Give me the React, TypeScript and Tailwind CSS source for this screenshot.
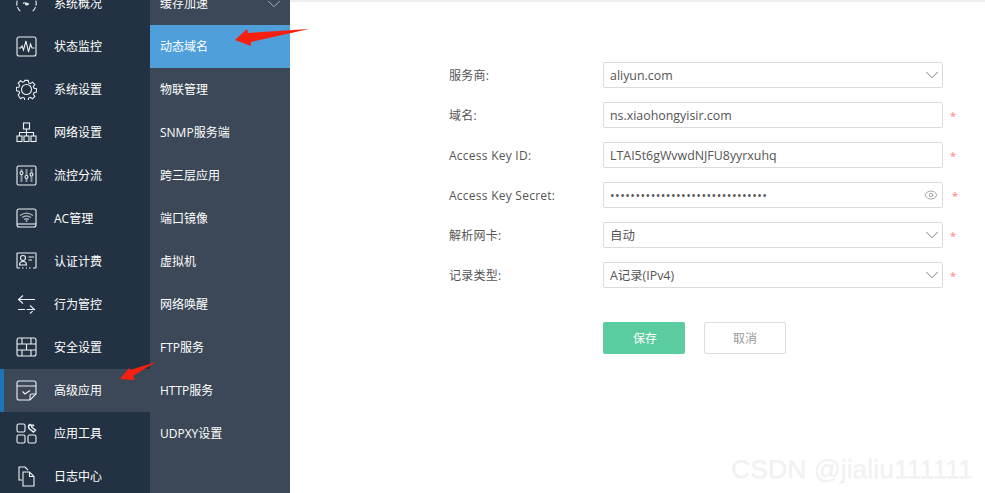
import React from 'react';
import { ChevronDown, Eye } from 'lucide-react';

const fontStack = "font-['Open_Sans','Noto_Sans_CJK_SC',sans-serif]";

const iconStroke = {
    fill: 'none',
    stroke: 'currentColor',
    strokeWidth: 1.1,
};

const Svg = ({ children }: { children: React.ReactNode }) => (
    <svg width="21" height="21" viewBox="0 0 21 21" className="shrink-0 text-[#eef1f4]" {...iconStroke}>
        {children}
    </svg>
);

const icons: Record<string, React.ReactNode> = {
    overview: (
        <Svg>
            <path d="M5 2.5C2.5 4 .8 7 .8 10.5c0 3.3 1.4 6 3.7 7.8M16 2.5c2.5 1.5 4.2 4.5 4.2 8 0 3.3-1.4 6-3.7 7.8" strokeDasharray="5 1.5" />
            <path d="M7 10.5c1-1 2-1 3 0s2 1 3 0" />
            <circle cx="10.5" cy="11" r="1" />
        </Svg>
    ),
    monitor: (
        <Svg>
            <rect x="1" y="1" width="19" height="19" rx="2" />
            <path d="M2.500 12h2l1.500-2 1.500 4 2.500-9 2.500 11 2-8 1.500 4h2.500" />
        </Svg>
    ),
    settings: (
        <Svg>
            <path d="M8.8 1h3.4l.5 2.6 1.7.7 2.2-1.5 2.4 2.4-1.5 2.2.7 1.7 2.6.5v3.4l-2.6.5-.7 1.7 1.5 2.2-2.4 2.4-2.2-1.5-1.7.7-.5 2.6H8.8l-.5-2.6-1.7-.7-2.2 1.5L2 16l1.5-2.2-.7-1.7L.2 11.6V8.2l2.6-.5.7-1.7L2 3.8 4.4 1.4l2.2 1.5 1.7-.7z" transform="translate(.2 .4) scale(.98)" />
            <circle cx="10.5" cy="10.5" r="5" />
        </Svg>
    ),
    network: (
        <Svg>
            <rect x="7.5" y="1" width="6" height="6" />
            <rect x="1" y="14" width="5" height="5.5" />
            <rect x="8" y="14" width="5" height="5.5" />
            <rect x="15" y="14" width="5" height="5.5" />
            <path d="M10.5 7v7M3.5 14v-3.5h14V14" />
        </Svg>
    ),
    flow: (
        <Svg>
            <rect x="1" y="1" width="19" height="19" rx="1.5" />
            <path d="M5.5 4v13M10.5 4v13M15.5 4v13" strokeWidth="2" stroke="#8b95a1" />
            <circle cx="5.5" cy="8" r="1.5" fill="#233242" />
            <circle cx="10.5" cy="12" r="1.5" fill="#233242" />
            <circle cx="15.5" cy="9.5" r="1.5" fill="#233242" />
        </Svg>
    ),
    ac: (
        <Svg>
            <rect x="1" y="1" width="19" height="18" rx="2" />
            <path d="M1 16h19" />
            <path d="M4 7.5c4-3 9-3 13 0M6 9.5c3-2 6-2 9 0M8 11.5c1.700-1 3.300-1 5 0" strokeWidth="1.300" stroke="#aab2bb" />
            <circle cx="10.500" cy="13" r="1" fill="#aab2bb" stroke="none" />
        </Svg>
    ),
    auth: (
        <Svg>
            <path d="M4 17H1.500a.5.5 0 0 1-.5-.5v-14a.5.5 0 0 1 .5-.5h18a.5.5 0 0 1 .5.500v14a.5.5 0 0 1-.5.5H17M6 17h1.500M10 17h1M13 17h1.500" />
            <circle cx="7" cy="7" r="2.500" />
            <path d="M3.500 14c0-2.500 1-3.500 3.500-3.500s3.500 1 3.500 3.500zM12.500 6H18M12.500 9H16" />
        </Svg>
    ),
    behavior: (
        <Svg>
            <path d="M19 5.500H2.500M7 1.500l-4.500 4 4.500 4" />
            <path d="M2 15.500h16.500M14 11.500l4.500 4-4.500 4" strokeDasharray="7 1.500" />
        </Svg>
    ),
    security: (
        <Svg>
            <rect x="1" y="1" width="19" height="18" rx="2" />
            <path d="M1 7h19M1 13h19M6 1v6M15 1v6M10.500 7v6M6 13v6M15 13v6" />
        </Svg>
    ),
    advanced: (
        <Svg>
            <path d="M14 20H3a2 2 0 0 1-2-2V3a2 2 0 0 1 2-2h15a2 2 0 0 1 2 2v11z" />
            <path d="M1 6h19M14 20v-4a2 2 0 0 1 2-2h4M6.500 11.500l2.500 2.500 5-3.500" />
        </Svg>
    ),
    tools: (
        <Svg>
            <rect x="1" y="1" width="8" height="8" rx="1.500" />
            <rect x="1" y="12" width="8" height="8" rx="1.500" />
            <rect x="12" y="12" width="8" height="8" rx="1.500" />
            <path d="M14 1.500a3 3 0 0 0-1 4l4.500 3.500 2-2L16 4.500a3 3 0 0 0-2-3zM16.500 1.500l1.500 1.500" strokeWidth="1.500" />
        </Svg>
    ),
    log: (
        <Svg>
            <path d="M6 14H3V1h6l3 3" />
            <path d="M7 6h6.500L18 10.500V20H7z" />
            <path d="M13.500 6v4.500H18" />
        </Svg>
    ),
};

const mainMenu = [
    ['overview', '系统概况'],
    ['monitor', '状态监控'],
    ['settings', '系统设置'],
    ['network', '网络设置'],
    ['flow', '流控分流'],
    ['ac', 'AC管理'],
    ['auth', '认证计费'],
    ['behavior', '行为管控'],
    ['security', '安全设置'],
    ['advanced', '高级应用'],
    ['tools', '应用工具'],
    ['log', '日志中心'],
];

const subMenu = [
    '缓存加速',
    '动态域名',
    '物联管理',
    'SNMP服务端',
    '跨三层应用',
    '端口镜像',
    '虚拟机',
    '网络唤醒',
    'FTP服务',
    'HTTP服务',
    'UDPXY设置',
];

const fields = [
    { label: '服务商:', value: 'aliyun.com', select: true },
    { label: '域名:', value: 'ns.xiaohongyisir.com', required: true },
    { label: 'Access Key ID:', value: 'LTAI5t6gWvwdNJFU8yyrxuhq', required: true },
    {
        label: 'Access Key Secret:',
        value: '•••••••••••••••••••••••••••••••',
        required: true,
        password: true,
    },
    { label: '解析网卡:', value: '自动', select: true, required: true },
    { label: '记录类型:', value: 'A记录(IPv4)', select: true, required: true },
];

export default function App() {
    return (
        <div className={`relative flex h-[493px] w-[985px] overflow-hidden bg-white ${fontStack}`}>
            {/* main nav, scrolled so the first row is cut off */}
            <nav className="w-[150px] shrink-0 bg-[#233242]">
                <div className="-mt-[18px]">
                    {mainMenu.map(([icon, label]) => {
                        const active = icon === 'advanced';
                        return (
                            <div
                                key={icon}
                                className={`flex h-[43px] items-center gap-[17px] border-l-4 pl-3 text-[12px] text-white ${
                                    active ? 'border-[#1f74b5] bg-[#3c4858]' : 'border-transparent'
                                }`}
                            >
                                {icons[icon]}
                                <span>{label}</span>
                            </div>
                        );
                    })}
                </div>
            </nav>

            {/* sub nav */}
            <div className="w-[140px] shrink-0 bg-[#3c4858]">
                <div className="-mt-[18px]">
                    {subMenu.map((label) => (
                        <div
                            key={label}
                            className={`flex h-[43px] items-center justify-between pl-[10px] pr-[5px] text-[12px] text-white ${
                                label === '动态域名' ? 'bg-[#4f9fdb]' : ''
                            }`}
                        >
                            <span>{label}</span>
                            {label === '缓存加速' && <ChevronDown size={22} strokeWidth={1} className="text-[#b4bac1]" />}
                        </div>
                    ))}
                </div>
            </div>

            {/* form */}
            <main className="flex-1 border-t-2 border-[#eeeeee] pl-[159px] pt-[60px]">
                <div className="flex flex-col gap-[14px]">
                    {fields.map((field) => (
                        <div key={field.label} className="flex h-[26px] items-center text-[12px] text-[#555555]">
                            <label className="w-[154px] shrink-0 pt-[2px] tracking-[0.25px]">{field.label}</label>
                            <div className="flex h-[26px] w-[340px] shrink-0 items-center justify-between rounded-[2px] border border-[#dadada] pl-[6px] pr-0 text-[12.4px]">
                                <span className={`pt-[2px] ${field.password ? 'tracking-[0.42px]' : ''}`}>{field.value}</span>
                                {field.select && <ChevronDown size={22} strokeWidth={1} className="-mr-[1px] text-[#777777]" />}
                                {field.password && <Eye size={14} strokeWidth={1.1} className="mr-[4px] text-[#777777]" />}
                            </div>
                            {field.required && (
                                <span className={`text-[11px] leading-none text-[#f77] ${field.password ? 'ml-[9px]' : 'ml-[7px]'}`}>*</span>
                            )}
                        </div>
                    ))}
                </div>
                <div className="ml-[154px] mt-[34px] flex gap-[19px] text-[12px]">
                    <button className="h-8 w-[82px] rounded-[2px] bg-[#5acca0] pl-[2px] pt-[1px] text-white">保存</button>
                    <button className="h-8 w-[82px] rounded-[2px] border border-[#dddddd] bg-white pt-[1px] text-[#999999]">取消</button>
                </div>
            </main>

            {/* red annotation arrows pasted over the screenshot */}
            <svg className="absolute left-0 top-0" width="985" height="493" fill="#f5200f" stroke="none">
                <polygon points="235,40 247,29 248,33 309,29 251,42 251,46" />
                <polygon points="120,379 129,368 130,370 156,362 133,376 135,380" />
            </svg>

            {/* watermark */}
            <span className="absolute left-[731px] top-[454px] font-['Liberation_Sans',sans-serif] text-[26.6px] leading-[30px] text-[#f1f1f1] [text-shadow:0_1px_1px_#f7f7f7]">
                CSDN @jialiu111111
            </span>
        </div>
    );
}
